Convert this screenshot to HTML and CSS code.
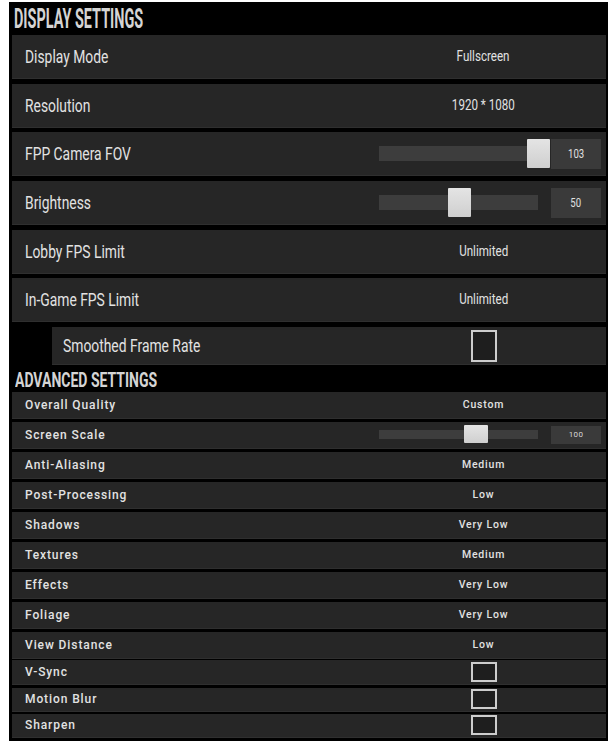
FILE: index.html
```html
<!DOCTYPE html>
<html>
<head>
<meta charset="utf-8">
<link rel="stylesheet" href="styles.css">
</head>
<body>
<div class="panel">
  <div class="title title-display"><span class="title-text">DISPLAY SETTINGS</span></div>
  <div class="display-rows">
    <div class="drow"><div class="dlabel"><span class="narrow">Display Mode</span></div><div class="cell"><span class="dvalue">Fullscreen</span></div></div>
    <div class="drow"><div class="dlabel"><span class="narrow">Resolution</span></div><div class="cell"><span class="dvalue">1920 * 1080</span></div></div>
    <div class="drow"><div class="dlabel"><span class="narrow">FPP Camera FOV</span></div>
      <div class="cell slider-cell">
        <div class="track"><div class="thumb" style="left:148px"></div></div>
        <div class="numbox"><span class="dnum">103</span></div>
      </div>
    </div>
    <div class="drow"><div class="dlabel"><span class="narrow">Brightness</span></div>
      <div class="cell slider-cell">
        <div class="track"><div class="thumb" style="left:69px"></div></div>
        <div class="numbox"><span class="dnum">50</span></div>
      </div>
    </div>
    <div class="drow"><div class="dlabel"><span class="narrow">Lobby FPS Limit</span></div><div class="cell"><span class="dvalue">Unlimited</span></div></div>
    <div class="drow"><div class="dlabel"><span class="narrow">In-Game FPS Limit</span></div><div class="cell"><span class="dvalue">Unlimited</span></div></div>
    <div class="drow sub"><div class="dlabel"><span class="narrow">Smoothed Frame Rate</span></div><div class="cell"><div class="check check-big"></div></div></div>
  </div>
  <div class="title title-adv"><span class="title-text">ADVANCED SETTINGS</span></div>
  <div class="adv-rows">
    <div class="arow"><div class="alabel">Overall Quality</div><div class="cell"><span class="avalue">Custom</span></div></div>
    <div class="arow"><div class="alabel">Screen Scale</div>
      <div class="cell slider-cell small">
        <div class="track"><div class="thumb" style="left:85px"></div></div>
        <div class="numbox"><span class="anum">100</span></div>
      </div>
    </div>
    <div class="arow"><div class="alabel">Anti-Aliasing</div><div class="cell"><span class="avalue">Medium</span></div></div>
    <div class="arow"><div class="alabel">Post-Processing</div><div class="cell"><span class="avalue">Low</span></div></div>
    <div class="arow"><div class="alabel">Shadows</div><div class="cell"><span class="avalue">Very Low</span></div></div>
    <div class="arow"><div class="alabel">Textures</div><div class="cell"><span class="avalue">Medium</span></div></div>
    <div class="arow"><div class="alabel">Effects</div><div class="cell"><span class="avalue">Very Low</span></div></div>
    <div class="arow"><div class="alabel">Foliage</div><div class="cell"><span class="avalue">Very Low</span></div></div>
    <div class="arow"><div class="alabel">View Distance</div><div class="cell"><span class="avalue">Low</span></div></div>
  </div>
  <div class="toggle-rows">
    <div class="trow r1"><div class="alabel">V-Sync</div><div class="cell"><div class="check"></div></div></div>
    <div class="trow r2"><div class="alabel">Motion Blur</div><div class="cell"><div class="check"></div></div></div>
    <div class="trow r3"><div class="alabel">Sharpen</div><div class="cell"><div class="check"></div></div></div>
  </div>
</div>
</body>
</html>
```

FILE: styles.css
```css
* { box-sizing: border-box; }
html, body { margin: 0; padding: 0; background: #ffffff; }
body { width: 613px; height: 752px; overflow: hidden; }

.panel {
  margin: 2px 0 0 9px;
  width: 599px;
  height: 739px;
  background: #000;
  padding: 0 2px 3px 3px;
  display: flex;
  flex-direction: column;
}

.title {
  display: flex;
  align-items: center;
  color: #d4d4d4;
  font-family: "Roboto", sans-serif;
  font-weight: bold;
  white-space: nowrap;
}
.title-text { display: inline-block; transform-origin: left center; }
.title-display { height: 33px; padding-left: 2px; font-size: 28px; }
.title-display .title-text { transform: scaleX(0.515); }
.title-adv { height: 26.5px; padding-left: 3px; font-size: 20px; padding-top: 4px; }
.title-adv .title-text { transform: scaleX(0.70); }

.display-rows { display: flex; flex-direction: column; gap: 4.7px; }
.drow {
  height: 44px;
  background: #262626;
  border-bottom: 1px solid #2f2f2f;
  display: grid;
  grid-template-columns: 1fr 245px;
  align-items: center;
}
.drow.sub { height: 38px; margin-left: 40px; }
.drow.sub .dlabel { padding-left: 11px; }

.dlabel {
  padding-left: 13px;
  color: #e2e2e2;
  font-family: "Roboto", sans-serif;
  font-size: 18px;
  white-space: nowrap;
}
.narrow { display: inline-block; transform: scaleX(0.77); transform-origin: left center; }
.cell { display: flex; align-items: center; justify-content: center; height: 100%; }
.dvalue {
  display: inline-block;
  color: #e2e2e2;
  font-family: "Roboto", sans-serif;
  font-size: 14.5px;
  transform: scaleX(0.8);
  transform-origin: center;
}

.slider-cell { justify-content: flex-start; padding: 0 5px 0 18px; gap: 13px; }
.track { position: relative; width: 159px; height: 15px; background: #3d3d3d; }
.thumb {
  position: absolute;
  top: -7px;
  width: 23px;
  height: 29px;
  background: linear-gradient(#e4e4e4, #cfcfcf);
  border-radius: 1px;
}
.numbox {
  width: 50px;
  height: 30px;
  background: #3a3a3a;
  display: flex;
  align-items: center;
  justify-content: center;
}
.dnum {
  display: inline-block;
  color: #e0e0e0;
  font-family: "Roboto", sans-serif;
  font-size: 12px;
  transform: scaleX(0.8);
}
.slider-cell.small .track { height: 9px; }
.slider-cell.small .thumb { top: -5px; width: 24px; height: 18px; }
.slider-cell.small .numbox { height: 18px; }
.anum { color: #d8d8d8; font-family: "Roboto", sans-serif; font-size: 8px; letter-spacing: 0.3px; }

.check {
  width: 26px;
  height: 20px;
  border: 2px solid #cdcdcd;
  background: #1e1e1e;
}
.check.check-big { height: 32px; }

.adv-rows { display: flex; flex-direction: column; gap: 3px; }
.arow, .trow {
  height: 27px;
  background: #262626;
  border-bottom: 1px solid #2f2f2f;
  display: grid;
  grid-template-columns: 1fr 245px;
  align-items: center;
}
.alabel {
  padding-left: 13px;
  color: #e2e2e2;
  font-family: "Roboto", sans-serif;
  font-weight: 500;
  font-size: 12px;
  letter-spacing: 0.9px;
  white-space: nowrap;
}
.avalue {
  color: #e2e2e2;
  font-family: "Roboto", sans-serif;
  font-weight: 500;
  font-size: 10.5px;
  letter-spacing: 0.8px;
}

.toggle-rows { display: flex; flex-direction: column; margin-top: 1px; }
.trow.r1 { height: 25px; }
.trow.r2 { height: 24px; margin-top: 3px; }
.trow.r3 { height: 24px; margin-top: 2px; }
```
